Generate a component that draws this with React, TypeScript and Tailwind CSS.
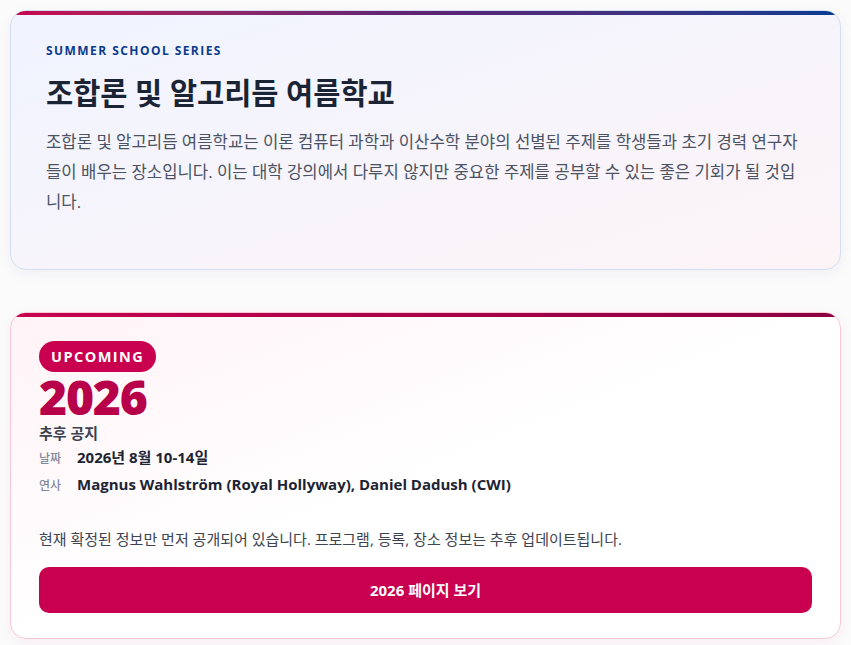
const font = "font-['Open_Sans','Noto_Sans_CJK_KR',sans-serif]";

function InfoRow({ label, value }: { label: string; value: string }) {
  return (
    <div className="flex items-baseline gap-[14px]">
      <span className="w-[24px] shrink-0 text-[12px] leading-5 font-medium text-[#7f879a]">
        {label}
      </span>
      <span className="text-[15px] font-bold leading-5 text-[#1c2434]">
        {value}
      </span>
    </div>
  );
}

export default function App() {
  return (
    <div className={`${font} min-h-screen bg-[#fbfbfc] px-[10px] pt-[10px] pb-6`}>
      <div className="flex flex-col gap-[42px]">
        {/* intro card */}
        <section className="relative overflow-hidden rounded-[16px] border border-[#d3def2] bg-gradient-to-br from-[#f0f4ff] to-[#fdf4f7] px-[35px] pt-8 pb-[52px] shadow-[0_4px_14px_rgba(30,40,80,0.05)]">
          <div className="absolute inset-x-0 top-0 h-[4px] bg-gradient-to-r from-[#c8004f] via-[#5b2374] to-[#003c90]" />
          <p className="text-[12px] leading-4 font-bold tracking-[0.12em] text-[#0b3b8c]">
            SUMMER SCHOOL SERIES
          </p>
          <h1 className="mt-4 text-[29.5px] leading-[36px] font-bold text-[#1b2434]">
            조합론 및 알고리듬 여름학교
          </h1>
          <p className="mt-4 text-[16.7px] leading-[30px] text-[#4a5263]">
            조합론 및 알고리듬 여름학교는 이론 컴퓨터 과학과 이산수학 분야의 선별된 주제를 학생들과 초기 경력 연구자들이 배우는 장소입니다. 이는 대학 강의에서 다루지 않지만 중요한 주제를 공부할 수 있는 좋은 기회가 될 것입니다.
          </p>
        </section>

        {/* upcoming card */}
        <section className="relative overflow-hidden rounded-[16px] border border-[#f7c9d8] bg-gradient-to-br from-[#fff3f7] via-white to-white px-7 pt-7 pb-[25px] shadow-[0_4px_14px_rgba(200,0,80,0.06)]">
          <div className="absolute inset-x-0 top-0 h-[4px] bg-gradient-to-r from-[#c8004f] to-[#8c0040]" />
          <span className="inline-block rounded-full bg-[#c8004f] px-3 py-[6px] text-[14.5px] leading-[19px] font-bold tracking-[0.1em] text-white">
            UPCOMING
          </span>
          <div className="mt-[1px] text-5xl leading-none font-extrabold tracking-tight text-[#b8004a]">
            2026
          </div>
          <p className="mt-[2px] text-[15px] leading-5 font-bold text-[#3b4250]">
            추후 공지
          </p>
          <div className="mt-[4px] flex flex-col gap-[5px]">
            <InfoRow label="날짜" value="2026년 8월 10-14일" />
            <InfoRow
              label="연사"
              value="Magnus Wahlström (Royal Hollyway), Daniel Dadush (CWI)"
            />
          </div>
          <p className="mt-[32px] text-[15px] leading-[22px] text-[#3d4452]">
            현재 확정된 정보만 먼저 공개되어 있습니다. 프로그램, 등록, 장소 정보는 추후 업데이트됩니다.
          </p>
          <button className="mt-[17px] flex h-[46px] w-full items-center justify-center rounded-[10px] bg-[#c8004f] text-[15px] font-bold text-white">
            2026 페이지 보기
          </button>
        </section>
      </div>
    </div>
  );
}
